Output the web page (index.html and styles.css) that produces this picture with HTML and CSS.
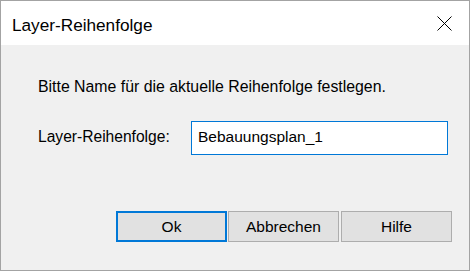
FILE: index.html
```html
<!DOCTYPE html>
<html lang="de">

<head>
  <meta charset="UTF-8">
  <meta name="viewport" content="width=device-width, initial-scale=1.0">
  <title>Layer-Reihenfolge</title>
  <link rel="stylesheet" href="styles.css">
</head>

<body>
  <div class="dialog">
    <!-- Titelleiste -->
    <div class="titlebar">
      <span class="title">Layer-Reihenfolge</span>
      <svg class="close" width="15" height="15" viewBox="0 0 15 15">
        <path d="M0.5 0.5 L14.5 14.5 M14.5 0.5 L0.5 14.5" stroke="#000" stroke-width="1" fill="none" />
      </svg>
    </div>

    <div class="content">
      <p class="hint">Bitte Name für die aktuelle Reihenfolge festlegen.</p>

      <div class="row">
        <label class="label" for="name">Layer-Reihenfolge:</label>
        <input class="field" id="name" type="text" value="Bebauungsplan_1">
      </div>

      <!-- Schaltflächen -->
      <div class="buttons">
        <button class="btn btn-default">Ok</button>
        <button class="btn">Abbrechen</button>
        <button class="btn btn-last">Hilfe</button>
      </div>
    </div>
  </div>
</body>

</html>
```

FILE: styles.css
```css
* {
  margin: 0;
  padding: 0;
  box-sizing: border-box;
}

body {
  font-family: "Liberation Sans", Arial, sans-serif;
  color: #000;
  background-color: #f0f0f0;
}

.dialog {
  width: 470px;
  height: 271px;
  border: 1px solid #a3a3a3;
  display: flex;
  flex-direction: column;
}

/* Titelleiste */
.titlebar {
  height: 44px;
  background-color: #fff;
  display: flex;
  align-items: center;
  justify-content: space-between;
  padding: 0 17px 0 11px;
}

.title {
  font-size: 17.2px;
  line-height: 20px;
  margin-top: 4px;
}

.close {
  display: block;
  margin-top: 1px;
}

.content {
  flex: 1;
  background-color: #f0f0f0;
  padding: 33px 17px 0 37px;
  font-size: 15.6px;
}

.hint {
  font-size: 15.85px;
  line-height: 18px;
}

.row {
  display: flex;
  align-items: center;
  margin-top: 25px;
}

.label {
  width: 153px;
  line-height: 18px;
  margin-bottom: 2px;
}

.field {
  width: 257px;
  height: 34px;
  border: 1px solid #0078d7;
  background-color: #fff;
  font-family: inherit;
  font-size: 15.5px;
  padding: 0 5px 2px 6px;
  outline: none;
  color: #000;
}

.buttons {
  display: flex;
  justify-content: flex-end;
  gap: 1px;
  margin-top: 56px;
}

.btn {
  width: 111px;
  height: 31px;
  border: 1px solid #adadad;
  background-color: #e1e1e1;
  font-family: inherit;
  font-size: 15.5px;
  color: #000;
}

.btn-default {
  border: 2px solid #0078d7;
}

.btn-last {
  margin-left: 1px;
}
```
